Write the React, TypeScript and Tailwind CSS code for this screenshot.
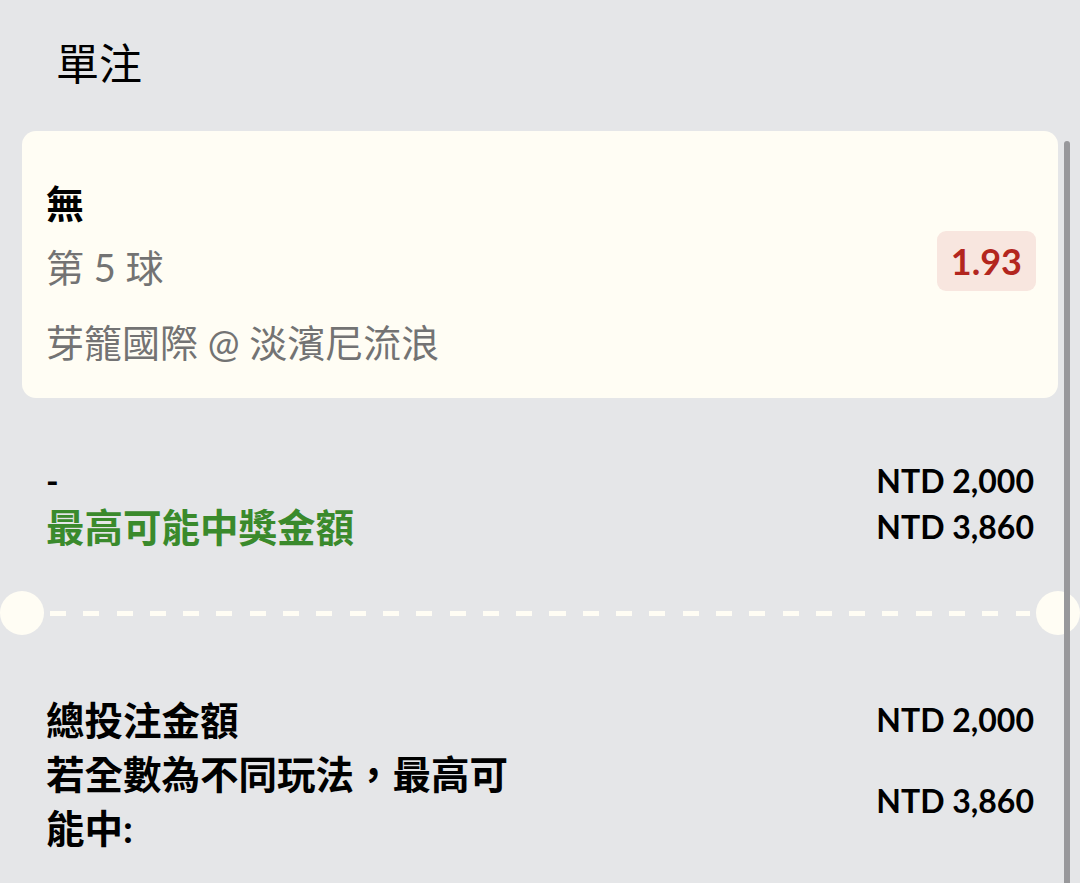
const font = { fontFamily: 'Lato, "Noto Sans CJK TC", sans-serif' };

const Separator = () => (
  <div className="-mx-[22px] flex items-center h-[44px]">
    <div className="w-[44px] h-[44px] rounded-full bg-[#fffdf4] shrink-0" />
    <div className="flex-1 mx-[6px] h-[5px] bg-[repeating-linear-gradient(90deg,#fffdf4_0_16px,transparent_16px_33.3px)]" />
    <div className="w-[44px] h-[44px] rounded-full bg-[#fffdf4] shrink-0" />
  </div>
);

export default function App() {
  return (
    <div
      className="relative w-[1080px] h-[883px] overflow-hidden bg-[#e5e6e8] px-[22px] text-black"
      style={font}
    >
      <h1 className="pt-[39px] pl-[34px] text-[43px] leading-[50px] font-normal">單注</h1>

      {/* selection card */}
      <div className="mt-[42px] flex justify-between rounded-[14px] bg-[#fffdf4] pl-[24px] pr-[22px] pt-[49px] pb-[33px]">
        <div className="text-[38px] leading-[46px]">
          <div className="font-bold">無</div>
          <div className="mt-[18px] text-[#737373]">第 5 球</div>
          <div className="mt-[29px] text-[#737373]">芽籠國際 @ 淡濱尼流浪</div>
        </div>
        <div className="self-start mt-[51px] rounded-[9px] bg-[#f8e6df] px-[14px] h-[60px] flex items-center">
          <span className="text-[36px] font-bold text-[#b3261e]">1.93</span>
        </div>
      </div>

      {/* stake row */}
      <div className="mt-[60px] flex justify-between px-[24px] leading-[46px]">
        <div className="font-bold">
          <div className="text-[34px]">-</div>
          <div className="text-[38.5px] text-[#3a8a2c]">最高可能中獎金額</div>
        </div>
        <div className="text-[32px] font-bold text-right">
          <div>NTD 2,000</div>
          <div>NTD 3,860</div>
        </div>
      </div>

      <div className="mt-[41px]">
        <Separator />
      </div>

      {/* totals */}
      <div className="mt-[58px] px-[24px] font-bold leading-[54px]">
        <div className="flex justify-between items-center">
          <span className="text-[38.5px]">總投注金額</span>
          <span className="text-[32px]">NTD 2,000</span>
        </div>
        <div className="flex justify-between items-center">
          <span className="text-[38.5px] w-[480px]">若全數為不同玩法，最高可能中:</span>
          <span className="text-[32px]">NTD 3,860</span>
        </div>
      </div>

      {/* scrollbar overlay */}
      <div className="absolute right-[10px] top-[141px] bottom-0 w-[6px] rounded-t-full bg-[#98989b]" />
    </div>
  );
}
